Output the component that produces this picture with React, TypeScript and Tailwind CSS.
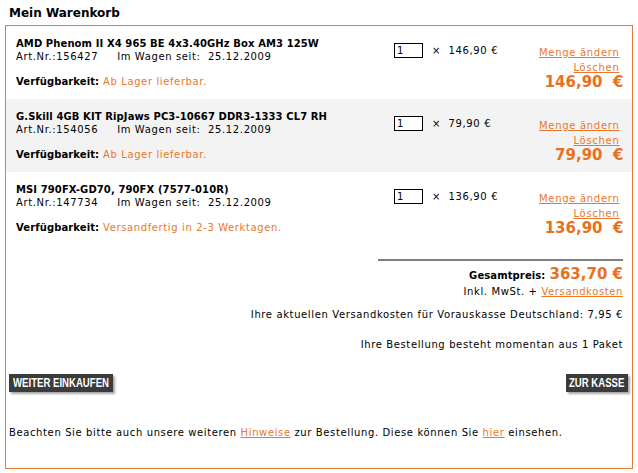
import React from "react";

const OR = "text-[#e8782c]";

type Item = { name: string; art: string; price: string; avail: string; gray?: boolean };

const items: Item[] = [
  { name: "AMD Phenom II X4 965 BE 4x3.40GHz Box AM3 125W", art: "156427", price: "146,90", avail: "Ab Lager lieferbar." },
  { name: "G.Skill 4GB KIT RipJaws PC3-10667 DDR3-1333 CL7 RH", art: "154056", price: "79,90", avail: "Ab Lager lieferbar.", gray: true },
  { name: "MSI 790FX-GD70, 790FX (7577-010R)", art: "147734", price: "136,90", avail: "Versandfertig in 2-3 Werktagen." },
];

function Row({ it }: { it: Item }) {
  return (
    <div className={`flex h-[73px] pl-[10px] pr-[9px] pt-[11px] ${it.gray ? "bg-[#f3f3f3]" : "bg-white"}`}>
      <div className="w-[378px] shrink-0">
        <div className="font-bold leading-[13px] text-black whitespace-nowrap tracking-[0.1px]">{it.name}</div>
        <div className="leading-[13px] whitespace-nowrap">
          Art.Nr.:{it.art}
          <span className="ml-[19px]">Im Wagen seit:&nbsp;&nbsp;25.12.2009</span>
        </div>
        <div className="mt-[12px] leading-[13px] whitespace-nowrap">
          <span className="font-bold tracking-[0.1px]">Verfügbarkeit:</span> <span className={OR}>{it.avail}</span>
        </div>
      </div>
      <div className="w-[145px] shrink-0 pt-[6px]">
        <div className="flex items-center">
          <div className="w-[29px] h-[15px] border border-black bg-white text-[10px] leading-[13px] pl-[2px]">1</div>
          <span className="ml-[9px] whitespace-nowrap">×&nbsp;&nbsp;{it.price} €</span>
        </div>
      </div>
      <div className="flex-1 flex flex-col items-end pt-[8px]">
        <a className={`${OR} underline leading-[15px] mr-[4px] whitespace-nowrap tracking-[0.7px]`}>Menge ändern</a>
        <a className={`${OR} underline leading-[15px] mr-[4px] tracking-[0.7px]`}>Löschen</a>
        <div className="text-[#e8701e] font-bold text-[15px] leading-[14px] whitespace-nowrap tracking-normal">{it.price}&nbsp; €</div>
      </div>
    </div>
  );
}

function Btn({ children, w }: { children: React.ReactNode; w: string }) {
  return (
    <div
      className={`${w} h-[18px] bg-[#3b3b3b] text-white font-bold text-[12px] leading-[18px] shadow-[2px_2px_2px_rgba(0,0,0,0.35)] whitespace-nowrap tracking-normal flex justify-center overflow-hidden`}
      style={{ fontFamily: '"Liberation Sans", Arial, sans-serif' }}
    >
      <span className="inline-block scale-x-[0.8]">{children}</span>
    </div>
  );
}

export default function App() {
  return (
    <div
      className="w-[638px] h-[473px] bg-white text-[10px] text-black overflow-hidden tracking-[0.62px]"
      style={{ fontFamily: '"DejaVu Sans", Verdana, sans-serif' }}
    >
      <div className="pl-[9px] pt-[5px] h-[25px] font-bold text-[12px] leading-[16px] tracking-normal">Mein Warenkorb</div>
      <div className="mx-[5px] w-[628px] h-[444px] border border-[#e07b39]">
        {items.map((it) => (
          <Row key={it.art} it={it} />
        ))}
        <div className="flex flex-col items-end pr-[9px]">
          <div className="mt-[14px] w-[245px] h-[2px] bg-[#808080]"></div>
          <div className="mt-[4px] flex items-baseline whitespace-nowrap leading-[18px]">
            <span className="font-bold mr-[4px] tracking-[0.1px]">Gesamtpreis:</span>
            <span className="text-[#e8701e] font-bold text-[15px] tracking-normal">363,70 €</span>
          </div>
          <div className="leading-[13px] whitespace-nowrap">
            Inkl. MwSt. + <a className={`${OR} underline`}>Versandkosten</a>
          </div>
          <div className="mt-[10px] leading-[13px] whitespace-nowrap">
            Ihre aktuellen Versandkosten für Vorauskasse Deutschland: 7,95 €
          </div>
          <div className="mt-[17px] leading-[13px] whitespace-nowrap">
            Ihre Bestellung besteht momentan aus 1 Paket
          </div>
        </div>
        <div className="mt-[23px] flex justify-between pl-[3px] pr-[4px]">
          <Btn w="w-[104px]">WEITER EINKAUFEN</Btn>
          <Btn w="w-[62px]">ZUR KASSE</Btn>
        </div>
        <div className="mt-[34px] pl-[3px] leading-[13px] whitespace-nowrap">
          Beachten Sie bitte auch unsere weiteren <a className={`${OR} underline`}>Hinweise</a> zur Bestellung. Diese können Sie{" "}
          <a className={`${OR} underline`}>hier</a> einsehen.
        </div>
      </div>
    </div>
  );
}
